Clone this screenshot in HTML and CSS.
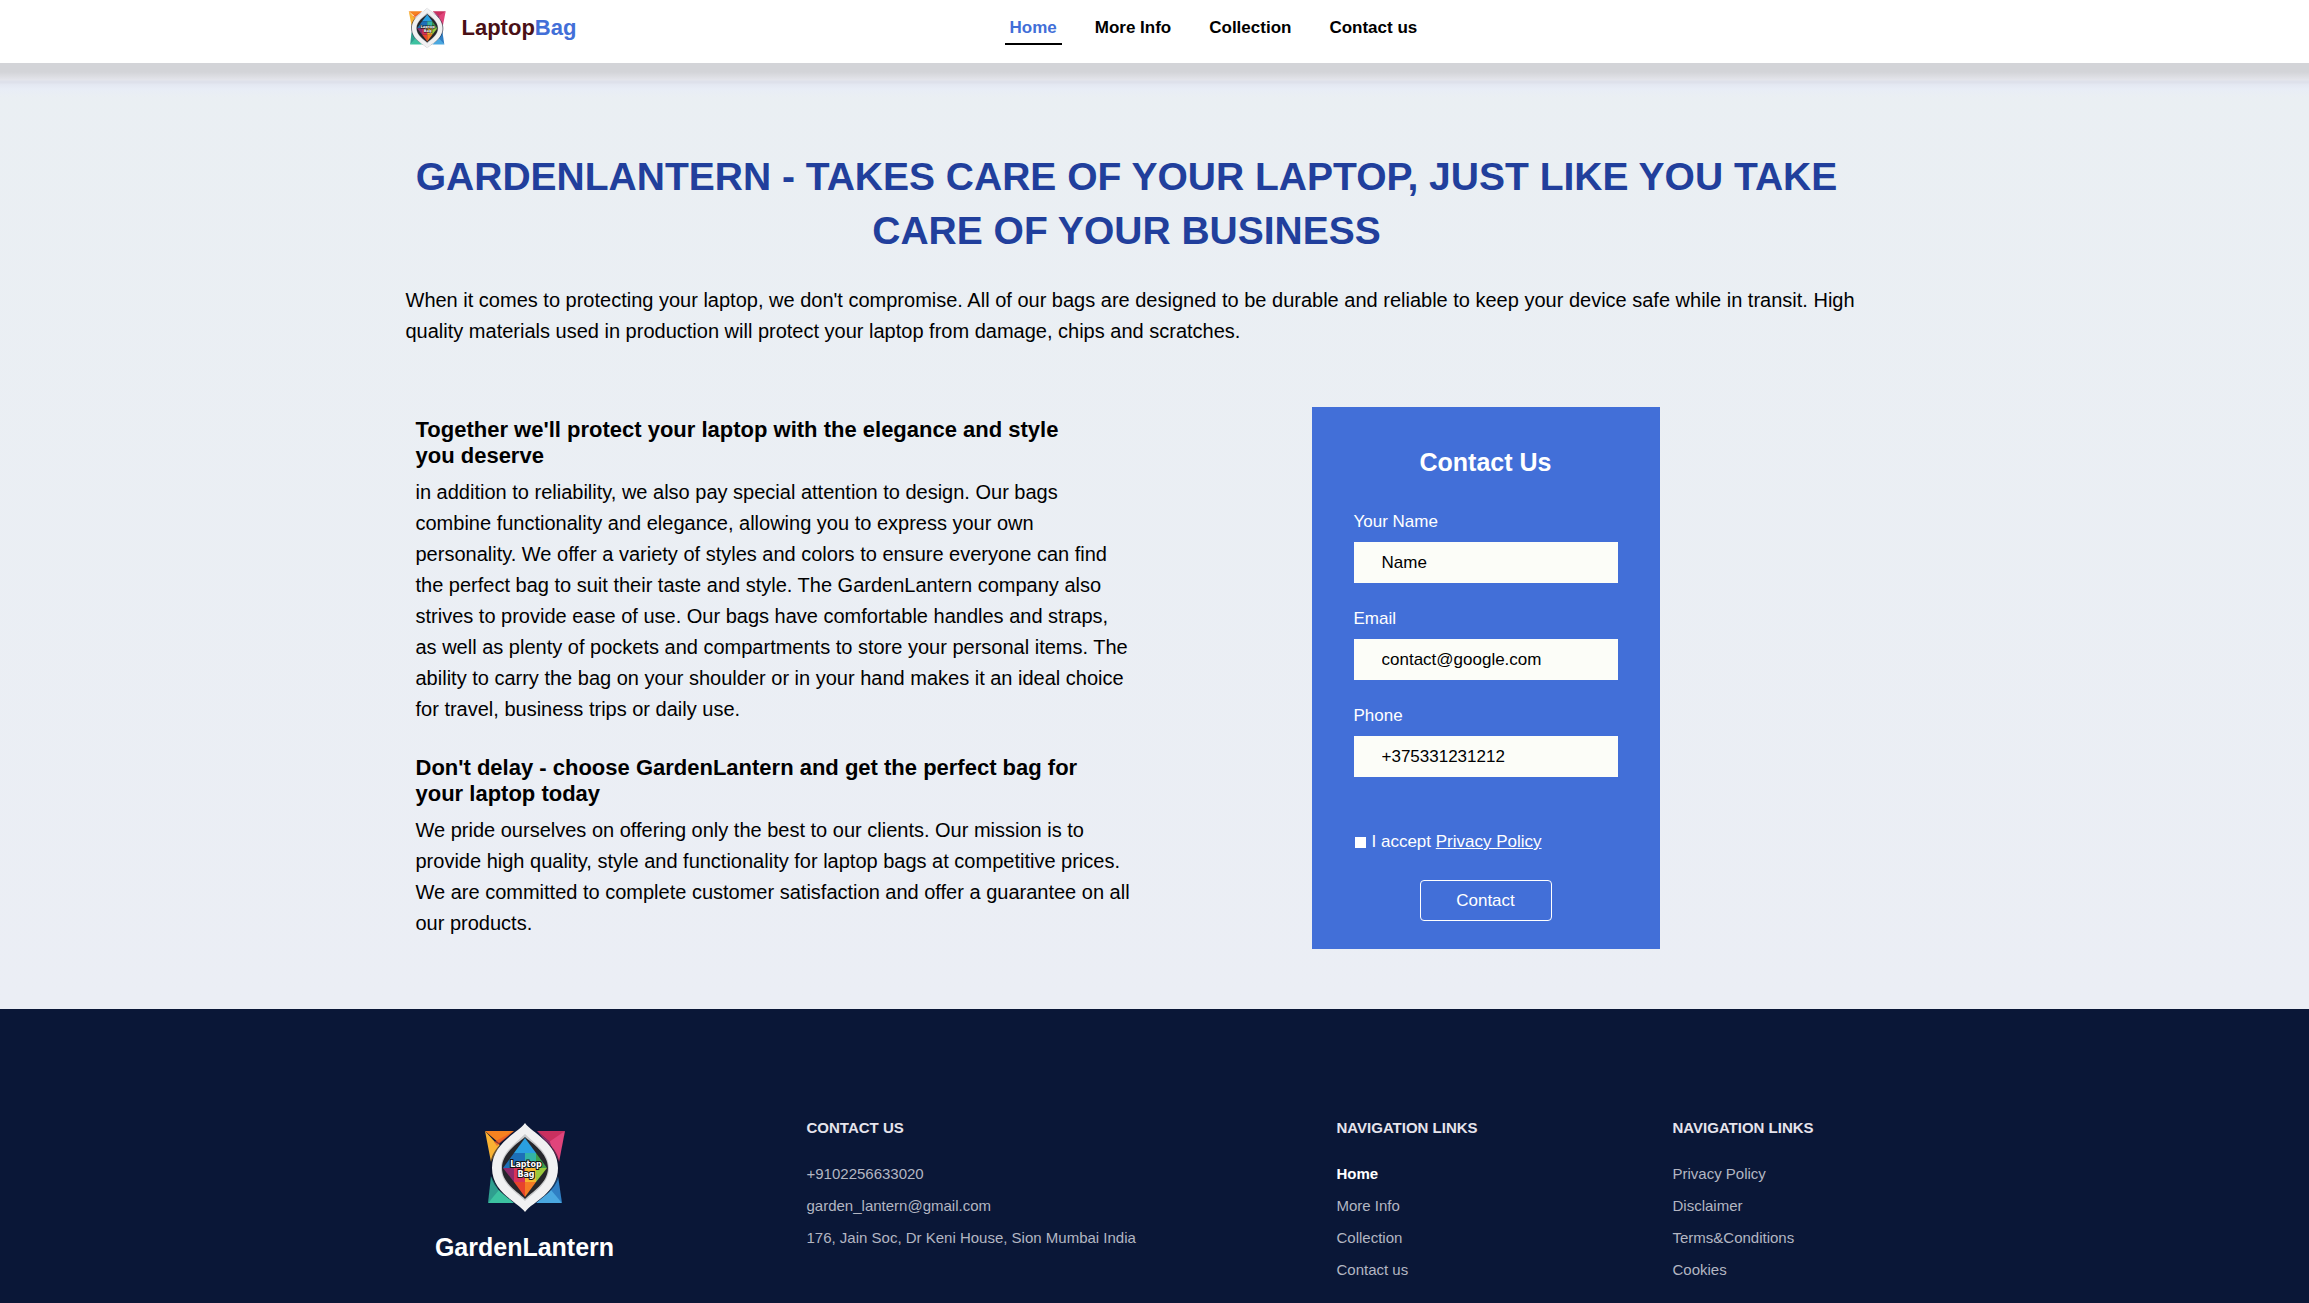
FILE: index.html
```html
<!DOCTYPE html>
<html lang="en">
<head>
<meta charset="utf-8">
<meta name="viewport" content="width=device-width, initial-scale=1">
<title>LaptopBag</title>
<link rel="stylesheet" href="styles.css">
</head>
<body>
<header class="header">
  <div class="wrap header-row">
    <a class="brand" href="#"><svg class="brand-icon" viewBox="4 7 81 91" aria-hidden="true"><use href="#emblem"/></svg><span>Laptop<span class="brand-accent">Bag</span></span></a>
    <nav class="nav">
      <a class="active" href="#">Home</a>
      <a href="#">More Info</a>
      <a href="#">Collection</a>
      <a href="#">Contact us</a>
    </nav>
  </div>
</header>

<main class="main">
  <div class="wrap">
    <div class="intro">
      <h1>GardenLantern - takes care of your laptop, just like you take care of your business</h1>
      <p>When it comes to protecting your laptop, we don't compromise. All of our bags are designed to be durable and reliable to keep your device safe while in transit. High quality materials used in production will protect your laptop from damage, chips and scratches.</p>
    </div>
    <div class="columns">
      <div class="copy">
        <section>
          <h2>Together we'll protect your laptop with the elegance and style you deserve</h2>
          <p>in addition to reliability, we also pay special attention to design. Our bags combine functionality and elegance, allowing you to express your own personality. We offer a variety of styles and colors to ensure everyone can find the perfect bag to suit their taste and style. The GardenLantern company also strives to provide ease of use. Our bags have comfortable handles and straps, as well as plenty of pockets and compartments to store your personal items. The ability to carry the bag on your shoulder or in your hand makes it an ideal choice for travel, business trips or daily use.</p>
        </section>
        <section>
          <h2>Don't delay - choose GardenLantern and get the perfect bag for your laptop today</h2>
          <p>We pride ourselves on offering only the best to our clients. Our mission is to provide high quality, style and functionality for laptop bags at competitive prices. We are committed to complete customer satisfaction and offer a guarantee on all our products.</p>
        </section>
      </div>
      <form class="card">
        <h2>Contact Us</h2>
        <div class="field"><label for="name">Your Name</label><input id="name" type="text" placeholder="Name"></div>
        <div class="field"><label for="email">Email</label><input id="email" type="email" placeholder="contact@google.com"></div>
        <div class="field"><label for="phone">Phone</label><input id="phone" type="tel" placeholder="+375331231212"></div>
        <div class="accept"><input id="accept" type="checkbox"><label for="accept">I accept <a href="#">Privacy Policy</a></label></div>
        <button type="submit">Contact</button>
      </form>
    </div>
  </div>
</main>

<footer class="footer">
  <div class="wrap footer-grid">
    <div class="footer-brand">
      <svg class="footer-logo" viewBox="4 7 81 91" aria-hidden="true">
        <g id="emblem">
          <path fill="#f9b233" d="M5 16l10 11 5 3-9 17z"/>
          <path fill="#f58220" d="M5 16h29L19 28z"/>
          <path fill="#e84e2c" d="M34 16L17 31l-3-4z" opacity=".6"/>
          <path fill="#c9305f" d="M57 16h28L72 29z"/>
          <path fill="#e0457b" d="M85 16l-6 31-10-20z"/>
          <path fill="#8e2f6b" d="M57 16l13 11 2 7z"/>
          <path fill="#2f9e8f" d="M11 61L8 88l12-11z"/>
          <path fill="#3cc2a0" d="M8 88h26L19 75z"/>
          <path fill="#2f7fc4" d="M78 61l4 27-13-11z"/>
          <path fill="#4aa8e0" d="M82 88H56l15-13z"/>
          <path fill="#0b1026" d="M45 9C34 21 10 29 10 53s24 32 35 43c11-11 35-19 35-43S56 21 45 9z" opacity=".6"/>
          <path fill="#f1f1f2" d="M45 8C38 18 12 28 12 53s26 34 33 44c7-10 33-19 33-44S52 18 45 8z"/>
          <path fill="#c9cacc" d="M45 19C37 27 21 37 21 53s16 25 24 33c8-8 24-17 24-33S53 27 45 19z"/>
          <path fill="#26262b" d="M45 22C38 28 22 38 22 53s16 24 23 31c7-7 23-16 23-31S52 28 45 22z"/>
          <path fill="#2a9fe0" d="M45 23l11 15H34z"/>
          <path fill="#1d6fb8" d="M34 38h11v15H23z"/>
          <path fill="#33b5a5" d="M45 38h11v15H45z"/>
          <path fill="#3f9f4a" d="M56 38l11 15H56z"/>
          <path fill="#8e2a6b" d="M23 53h11v14z"/>
          <path fill="#d8325a" d="M34 53h11v14H34z"/>
          <path fill="#f6b42c" d="M45 53h11v14H45z"/>
          <path fill="#9ac93c" d="M56 53h11L56 67z"/>
          <path fill="#e8432c" d="M34 67h11v15z"/>
          <path fill="#f57c25" d="M45 67h11L45 82z"/>
          <g class="emblem-text" text-anchor="middle"><text x="46" y="52">Laptop</text><text x="46" y="62">Bag</text></g>
        </g>
      </svg>
      <span>GardenLantern</span>
    </div>
    <div>
      <h3>CONTACT US</h3>
      <ul>
        <li>+9102256633020</li>
        <li>garden_lantern@gmail.com</li>
        <li>176, Jain Soc, Dr Keni House, Sion Mumbai India</li>
      </ul>
    </div>
    <div>
      <h3>NAVIGATION LINKS</h3>
      <ul>
        <li><a class="current" href="#">Home</a></li>
        <li><a href="#">More Info</a></li>
        <li><a href="#">Collection</a></li>
        <li><a href="#">Contact us</a></li>
      </ul>
    </div>
    <div>
      <h3>NAVIGATION LINKS</h3>
      <ul>
        <li><a href="#">Privacy Policy</a></li>
        <li><a href="#">Disclaimer</a></li>
        <li><a href="#">Terms&amp;Conditions</a></li>
        <li><a href="#">Cookies</a></li>
      </ul>
    </div>
  </div>
</footer>
</body>
</html>
```
FILE: styles.css
```css
* { box-sizing: border-box; margin: 0; padding: 0; }

body {
  display: flex;
  flex-direction: column;
  min-height: 100vh;
  font-family: "Liberation Sans", Arial, sans-serif;
  color: #000;
  background: #0a1737;
}

a { color: inherit; text-decoration: none; }
ul { list-style: none; }
.emblem-text { font: bold 8px "DejaVu Sans", sans-serif; fill: #fff; stroke: #111; stroke-width: 2px; paint-order: stroke; }

.wrap { width: 100%; max-width: 1498px; margin: 0 auto; }

/* Header */
.header { background: #fff; }
.header-row {
  display: grid;
  grid-template-columns: 599px 1fr;
  align-items: center;
  min-height: 63px;
  padding-bottom: 7px;
}
.brand { display: flex; align-items: center; gap: 14px; font-size: 22px; font-weight: 700; color: #4a1016; }
.brand-icon { width: 42px; height: 42px; }
.brand-accent { color: #426fd8; }
.nav { display: flex; gap: 28px; font-size: 17px; font-weight: 700; line-height: 20px; }
.nav a { padding: 7px 5px 5px; border-bottom: 2px solid transparent; }
.nav .active { color: #426fd8; border-color: #000; }

/* Main: the first layer is the shade that the header casts */
.main {
  padding: 87px 0 60px;
  background:
    linear-gradient(#d3d4d8 0 9px, #e4e5eb 17px, #dee1eb 18px 20px, #e3e7f1 21px, #e8edf6 26px, transparent 34px) no-repeat 0 0 / 100% 34px,
    linear-gradient(#eaeff3, #ebeef5);
}
.intro { max-width: 1452px; }
.intro h1 {
  padding-right: 10px;
  font-size: 39px;
  line-height: 54px;
  text-align: center;
  text-transform: uppercase;
  color: #213f9c;
}
.intro p { margin-top: 27px; font-size: 20px; line-height: 31px; }

.columns { display: flex; gap: 179px; margin-top: 60px; }
.copy { display: flex; flex-direction: column; gap: 30px; width: 727px; padding: 10px 0 0 10px; }
.copy h2 { padding-right: 40px; font-size: 22px; line-height: 26px; }
.copy p { margin-top: 8px; font-size: 20px; line-height: 31px; }

.card {
  display: flex;
  flex-direction: column;
  width: 348px;
  padding: 40px 42px 28px;
  font-size: 17px;
  line-height: 20px;
  color: #fff;
  background: #426fd8;
}
.card h2 { margin-bottom: 35px; font-size: 25px; line-height: 30px; text-align: center; }
.field { display: flex; flex-direction: column; gap: 10px; margin-bottom: 26px; }
.field input {
  height: 41px;
  padding: 0 28px;
  border: 0;
  font: inherit;
  color: #000;
  background: #fcfdf8;
}
.field input::placeholder { color: #000; opacity: 1; }
.accept { display: flex; align-items: center; gap: 6px; margin: 29px 0 28px; }
.accept input { appearance: none; width: 11px; height: 11px; margin-left: 1px; background: #fff; }
.accept a { text-decoration: underline; }
.card button {
  align-self: center;
  width: 132px;
  height: 41px;
  border: 1px solid #fff;
  border-radius: 4px;
  font: inherit;
  color: #fff;
  background: none;
}

/* Footer */
.footer { flex: 1; padding: 109px 0 20px; color: #b3b6c2; background: #0a1737; }
.footer-grid {
  display: grid;
  grid-template-columns: 401px 530px 336px 1fr;
  font-size: 15px;
  line-height: 20px;
}
.footer-brand {
  display: flex;
  flex-direction: column;
  align-items: center;
  gap: 19px;
  width: 238px;
  padding-top: 4px;
  font-size: 25px;
  font-weight: 700;
  line-height: 30px;
  color: #fff;
}
.footer-logo { width: 81px; height: 91px; }
.footer h3 { margin-bottom: 26px; font-size: 15px; line-height: 20px; color: #e6e4ec; }
.footer ul { display: grid; gap: 12px; }
.footer .current { font-weight: 700; color: #fff; }
```
